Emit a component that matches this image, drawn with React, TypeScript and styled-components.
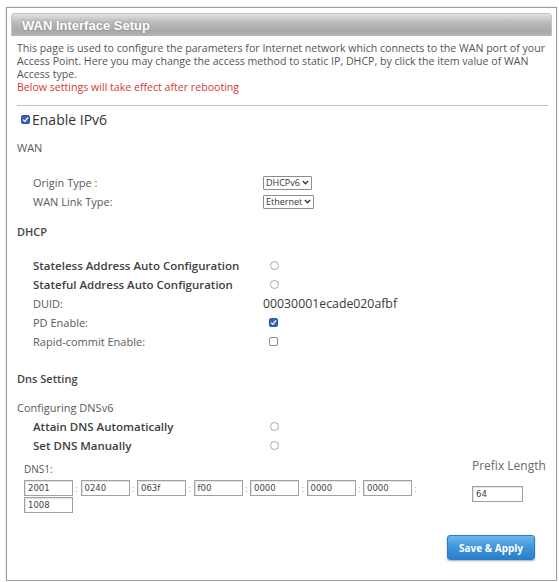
import styled, { createGlobalStyle } from "styled-components";

const GlobalStyle = createGlobalStyle`
  html, body {
    margin: 0;
    padding: 0;
    background: #ffffff;
  }
  body {
    font-family: "Open Sans", "Liberation Sans", sans-serif;
  }
`;

const dnsParts = ["2001", "0240", "063f", "f00", "0000", "0000", "0000", "1008"];

function Chevron() {
  return (
    <svg width="7" height="5" viewBox="0 0 7 5">
      <path d="M0.8 1 L3.5 3.8 L6.2 1" fill="none" stroke="#333" strokeWidth="1.3" />
    </svg>
  );
}

function Tick() {
  return (
    <svg width="7" height="7" viewBox="0 0 7 7">
      <path d="M1 3.6 L2.9 5.4 L6.1 1.4" fill="none" stroke="#fff" strokeWidth="1.3" />
    </svg>
  );
}

export default function App() {
  return (
    <>
      <GlobalStyle />
      <Panel>
        <Header>WAN Interface Setup</Header>
        <Intro>
          <IntroLine>
            This page is used to configure the parameters for Internet network which connects to the WAN port of your
          </IntroLine>
          <IntroLine>
            Access Point. Here you may change the access method to static IP, DHCP, by click the item value of WAN
          </IntroLine>
          <IntroLine>Access type.</IntroLine>
          <IntroLine $warn>Below settings will take effect after rebooting</IntroLine>
        </Intro>
        <Divider />

        <EnableRow>
          <Check $checked>
            <Tick />
          </Check>
          Enable IPv6
        </EnableRow>

        <SectionTitle $top={13}>WAN</SectionTitle>
        <FieldGroup $top={18}>
          <FieldRow>
            <Label>Origin Type :</Label>
            <SelectBox>
              DHCPv6 <Chevron />
            </SelectBox>
          </FieldRow>
          <FieldRow>
            <Label>WAN Link Type:</Label>
            <SelectBox>
              Ethernet <Chevron />
            </SelectBox>
          </FieldRow>
        </FieldGroup>

        <SectionTitle $top={14} $bold>
          DHCP
        </SectionTitle>
        <FieldGroup $top={17}>
          <FieldRow>
            <Label $strong>Stateless Address Auto Configuration</Label>
            <Radio />
          </FieldRow>
          <FieldRow>
            <Label $strong>Stateful Address Auto Configuration</Label>
            <Radio />
          </FieldRow>
          <FieldRow>
            <Label>DUID:</Label>
            <Value>00030001ecade020afbf</Value>
          </FieldRow>
          <FieldRow>
            <Label>PD Enable:</Label>
            <Check $checked $boxed>
              <Tick />
            </Check>
          </FieldRow>
          <FieldRow>
            <Label>Rapid-commit Enable:</Label>
            <Check $boxed />
          </FieldRow>
        </FieldGroup>

        <SectionTitle $top={21} $bold>
          Dns Setting
        </SectionTitle>
        <SectionTitle $top={15}>Configuring DNSv6</SectionTitle>
        <FieldGroup $top={2}>
          <FieldRow>
            <Label $strong>Attain DNS Automatically</Label>
            <Radio />
          </FieldRow>
          <FieldRow>
            <Label $strong>Set DNS Manually</Label>
            <Radio />
          </FieldRow>
        </FieldGroup>

        <DnsArea>
          <DnsLeft>
            <DnsLabel>DNS1:</DnsLabel>
            <AddrGrid>
              {dnsParts.map((part, i) => (
                <AddrCell key={i}>
                  <AddrBox>{part}</AddrBox>
                  {i < 7 && <Colon>:</Colon>}
                </AddrCell>
              ))}
            </AddrGrid>
          </DnsLeft>
          <DnsRight>
            <PrefixLabel>Prefix Length</PrefixLabel>
            <PrefixBox>64</PrefixBox>
          </DnsRight>
        </DnsArea>

        <Footer>
          <SaveButton>Save &amp; Apply</SaveButton>
        </Footer>
      </Panel>
    </>
  );
}

const Panel = styled.div`
  box-sizing: border-box;
  width: 551px;
  height: 574px;
  margin: 7px 0 0 6px;
  padding: 5px 4px 0 4px;
  border: 1px solid #9c9c9c;
  background: #fff;
  box-shadow: 0 0 2px rgba(0, 0, 0, 0.15);
`;

const Header = styled.div`
  height: 22px;
  display: flex;
  align-items: center;
  padding-left: 10px;
  border: 1px solid #c4c4c4;
  border-bottom: none;
  border-radius: 4px 4px 0 0;
  background: linear-gradient(#e2e2e2 0%, #bdbdbd 35%, #a9a9a9 75%, #b4b4b4 100%);
  color: #fff;
  font-family: "Liberation Sans", Arial, sans-serif;
  font-size: 13px;
  font-weight: 700;
  text-shadow: 0 0 2px rgba(90, 90, 90, 0.6);
`;

const Intro = styled.div`
  margin-top: 6px;
  padding-left: 6px;
  display: flex;
  flex-direction: column;
`;

const IntroLine = styled.div<{ $warn?: boolean }>`
  height: 13px;
  font-size: 10.6px;
  line-height: 13px;
  color: ${(p) => (p.$warn ? "#d33a35" : "#555")};
  white-space: nowrap;
`;

const Divider = styled.div`
  margin: 11px 4px 0 6px;
  border-top: 1px solid #c2c2c2;
`;

const EnableRow = styled.div`
  height: 18px;
  margin-top: 4px;
  padding-left: 10px;
  display: flex;
  align-items: center;
  gap: 2px;
  font-size: 14px;
  color: #333;
`;

const Check = styled.span<{ $checked?: boolean; $boxed?: boolean }>`
  box-sizing: border-box;
  width: 9px;
  height: 9px;
  display: inline-flex;
  align-items: center;
  justify-content: center;
  margin-left: ${(p) => (p.$boxed ? "6px" : "0")};
  border-radius: 2px;
  border: 1px solid ${(p) => (p.$checked ? "#2f56a6" : "#8a8a8a")};
  background: ${(p) => (p.$checked ? "#3a62b5" : "#fff")};
`;

const SectionTitle = styled.div<{ $top: number; $bold?: boolean }>`
  margin-top: ${(p) => p.$top}px;
  padding-left: 6px;
  line-height: 14px;
  font-size: 11px;
  font-weight: ${(p) => (p.$bold ? 600 : 400)};
  color: ${(p) => (p.$bold ? "#444" : "#5a5a5a")};
`;

const FieldGroup = styled.div<{ $top: number }>`
  margin-top: ${(p) => p.$top}px;
  padding-left: 22px;
`;

const FieldRow = styled.div`
  height: 19px;
  display: grid;
  grid-template-columns: 230px auto;
  align-items: center;
`;

const Label = styled.span<{ $strong?: boolean }>`
  font-size: ${(p) => (p.$strong ? "11.5px" : "11px")};
  font-weight: ${(p) => (p.$strong ? 600 : 400)};
  color: ${(p) => (p.$strong ? "#404040" : "#5a5a5a")};
  white-space: nowrap;
`;

const Value = styled.span`
  font-size: 12.3px;
  color: #3a3a3a;
`;

const SelectBox = styled.span`
  box-sizing: border-box;
  height: 14px;
  justify-self: start;
  display: inline-flex;
  align-items: center;
  gap: 2px;
  padding: 0 2px;
  border: 1px solid #8c8c8c;
  border-radius: 1px;
  font-size: 9px;
  color: #333;
`;

const Radio = styled.span`
  box-sizing: border-box;
  width: 9px;
  height: 9px;
  margin-left: 7px;
  border-radius: 50%;
  border: 1px solid #a8a8a8;
  background: #fff;
`;

const DnsArea = styled.div`
  margin-top: 7px;
  display: flex;
  justify-content: space-between;
`;

const DnsLeft = styled.div`
  padding-left: 13px;
  width: 420px;
`;

const DnsLabel = styled.div`
  font-size: 10px;
  line-height: 14px;
  color: #555;
`;

const AddrGrid = styled.div`
  margin-top: 4px;
  display: flex;
  flex-wrap: wrap;
  row-gap: 1px;
  width: 410px;
`;

const AddrCell = styled.div`
  display: flex;
  align-items: center;
`;

const AddrBox = styled.span`
  box-sizing: border-box;
  width: 49px;
  height: 16px;
  padding-left: 3px;
  display: flex;
  align-items: center;
  border: 1px solid #a0a0a0;
  box-shadow: inset 1px 1px 1px rgba(0, 0, 0, 0.12);
  font-family: "DejaVu Sans", sans-serif;
  font-size: 8.5px;
  color: #444;
`;

const Colon = styled.span`
  width: 7.5px;
  text-align: center;
  font-size: 9px;
  color: #999;
`;

const DnsRight = styled.div`
  width: 80px;
  display: flex;
  flex-direction: column;
  gap: 12px;
`;

const PrefixLabel = styled.div`
  margin-top: -4px;
  font-size: 12px;
  line-height: 16px;
  color: #6a6a6a;
`;

const PrefixBox = styled(AddrBox)`
  width: 51px;
`;

const Footer = styled.div`
  margin-top: 22px;
  display: flex;
  justify-content: flex-end;
  padding-right: 17px;
`;

const SaveButton = styled.button`
  width: 88px;
  height: 25px;
  border: 1px solid #2d7cc4;
  border-radius: 3px;
  background: linear-gradient(#6cb8ec 0%, #3d95dc 50%, #2a7fcd 100%);
  box-shadow: 0 1px 2px rgba(0, 0, 0, 0.35);
  color: #fff;
  font-family: "Open Sans", sans-serif;
  font-size: 10px;
  font-weight: 700;
  cursor: pointer;
`;
